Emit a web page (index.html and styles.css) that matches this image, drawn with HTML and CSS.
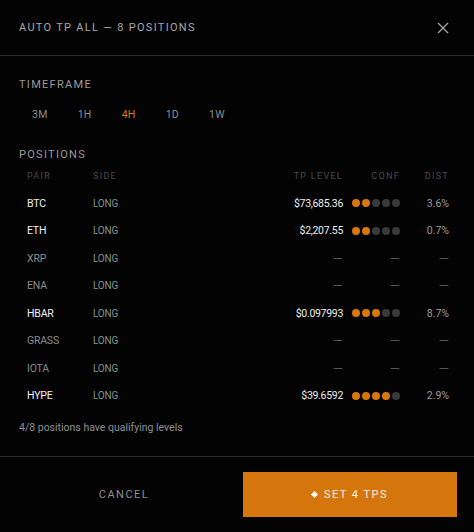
FILE: index.html
```html
<!DOCTYPE html>
<html lang="en">
<head>
  <meta charset="UTF-8" />
  <meta name="viewport" content="width=device-width, initial-scale=1" />
  <title>Auto TP All</title>
  <link rel="stylesheet" href="styles.css">
</head>
<body>
  <div class="modal">
    <header class="modal-head">
      <h2 class="modal-title">Auto TP All — 8 Positions</h2>
      <button class="close-btn" aria-label="Close">
        <svg width="12" height="12" viewBox="0 0 12 12">
          <path d="M1 1L11 11M11 1L1 11" stroke="currentColor" stroke-width="1.3" fill="none" />
        </svg>
      </button>
    </header>

    <section class="modal-body">
      <div class="label">Timeframe</div>
      <div class="tabs">
        <button class="tab">3M</button>
        <button class="tab">1H</button>
        <button class="tab active">4H</button>
        <button class="tab">1D</button>
        <button class="tab">1W</button>
      </div>

      <div class="label positions-label">Positions</div>
      <div class="table">
        <div class="row head">
          <span>Pair</span><span>Side</span><span class="r">TP Level</span><span class="r">Conf</span><span class="r">Dist</span>
        </div>
        <div class="row">
          <span class="pair">BTC</span><span class="side">LONG</span><span class="r price">$73,685.36</span>
          <span class="r dots"><i class="on"></i><i class="on"></i><i></i><i></i><i></i></span><span class="r dist">3.6%</span>
        </div>
        <div class="row">
          <span class="pair">ETH</span><span class="side">LONG</span><span class="r price">$2,207.55</span>
          <span class="r dots"><i class="on"></i><i class="on"></i><i></i><i></i><i></i></span><span class="r dist">0.7%</span>
        </div>
        <div class="row empty">
          <span class="pair">XRP</span><span class="side">LONG</span><span class="r dash">—</span><span class="r dash">—</span><span class="r dash">—</span>
        </div>
        <div class="row empty">
          <span class="pair">ENA</span><span class="side">LONG</span><span class="r dash">—</span><span class="r dash">—</span><span class="r dash">—</span>
        </div>
        <div class="row">
          <span class="pair">HBAR</span><span class="side">LONG</span><span class="r price">$0.097993</span>
          <span class="r dots"><i class="on"></i><i class="on"></i><i class="on"></i><i></i><i></i></span><span class="r dist">8.7%</span>
        </div>
        <div class="row empty">
          <span class="pair">GRASS</span><span class="side">LONG</span><span class="r dash">—</span><span class="r dash">—</span><span class="r dash">—</span>
        </div>
        <div class="row empty">
          <span class="pair">IOTA</span><span class="side">LONG</span><span class="r dash">—</span><span class="r dash">—</span><span class="r dash">—</span>
        </div>
        <div class="row">
          <span class="pair">HYPE</span><span class="side">LONG</span><span class="r price">$39.6592</span>
          <span class="r dots"><i class="on"></i><i class="on"></i><i class="on"></i><i class="on"></i><i></i></span><span class="r dist">2.9%</span>
        </div>
      </div>

      <p class="summary">4/8 positions have qualifying levels</p>
    </section>

    <footer class="modal-foot">
      <button class="btn cancel">Cancel</button>
      <button class="btn confirm"><span class="diamond"></span>Set 4 TPs</button>
    </footer>
  </div>
</body>
</html>
```

FILE: styles.css
```css
body {
  margin: 0;
  background-color: #030303;
  color: #e6e6e6;
  font-family: Roboto, 'Liberation Sans', sans-serif;
}
button {
  font-family: inherit;
  background: none;
  border: none;
  cursor: pointer;
  padding: 0;
}
.modal {
  width: 474px;
  height: 532px;
  display: flex;
  flex-direction: column;
}
.modal-head {
  height: 56px;
  box-sizing: border-box;
  padding: 0 19px;
  display: flex;
  align-items: center;
  justify-content: space-between;
  border-bottom: 1px solid #2b2b2b;
}
.modal-title {
  margin: 0;
  font-size: 11px;
  font-weight: 400;
  letter-spacing: 1.3px;
  text-transform: uppercase;
  color: #a8a8a8;
}
.close-btn {
  color: #a4a4a4;
  width: 16px;
  height: 16px;
  display: flex;
  align-items: center;
  justify-content: center;
  margin-right: 4px;
}
.modal-body {
  flex: 1;
  padding: 22px 19px 0;
}
.label {
  font-size: 11px;
  letter-spacing: 1.3px;
  text-transform: uppercase;
  color: #9a9a9a;
  line-height: 14px;
}
.tabs {
  display: flex;
  gap: 4px;
  margin-top: 10px;
}
.tab {
  padding: 6px 13px;
  font-size: 10.5px;
  letter-spacing: 0.3px;
  color: #8c8c8c;
}
.tab.active {
  color: #d6780c;
}
.positions-label {
  margin-top: 21px;
}
.table {
  padding: 0 6px 0 8px;
}
.row {
  display: grid;
  grid-template-columns: 66px 1fr 90px 57px 49px;
  align-items: center;
  height: 27.5px;
  font-size: 10.5px;
}
.row .r {
  text-align: right;
}
.row.head {
  font-size: 9px;
  letter-spacing: 1.3px;
  text-transform: uppercase;
  color: #4a4a4a;
}
.pair {
  color: #f0f0f0;
  letter-spacing: -0.2px;
}
.row.empty .pair {
  color: #8a8a8a;
}
.side {
  color: #7f968a;
  font-size: 10px;
  letter-spacing: -0.2px;
}
.price {
  color: #ededed;
  letter-spacing: -0.3px;
}
.dist {
  color: #9c9c9c;
}
.dash {
  color: #555;
  font-size: 13px;
  line-height: 1;
}
.dots {
  display: flex;
  justify-content: flex-end;
  gap: 2px;
}
.dots i {
  width: 8px;
  height: 8px;
  border-radius: 50%;
  background-color: #3a3a3a;
}
.dots i.on {
  background-color: #d6780c;
}
.summary {
  margin: 11px 0 0;
  font-size: 10.5px;
  color: #8e8e8e;
}
.modal-foot {
  border-top: 1px solid #2b2b2b;
  padding: 15px 17px;
  display: flex;
  gap: 12px;
}
.btn {
  flex: 1;
  height: 45px;
  font-size: 11px;
  letter-spacing: 1.5px;
  text-transform: uppercase;
  display: flex;
  align-items: center;
  justify-content: center;
}
.cancel {
  color: #8f8f8f;
}
.confirm {
  background-color: #d4760b;
  color: #fbf3ea;
}
.diamond {
  width: 5px;
  height: 5px;
  background-color: #fff;
  transform: rotate(45deg);
  margin-right: 7px;
}
```
